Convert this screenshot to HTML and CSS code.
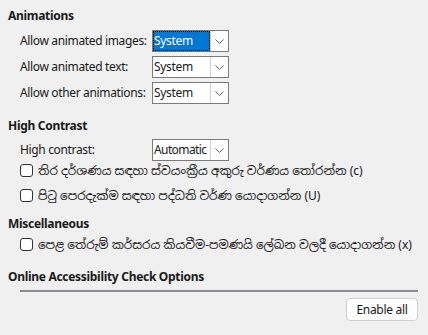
FILE: index.html
```html
<!DOCTYPE html>
<html>
<head>
<meta charset="utf-8">
<link rel="stylesheet" href="styles.css">
</head>
<body>
<div class="page">
  <section class="group g-anim">
    <h2 class="title">Animations</h2>
    <div class="formgrid">
      <label class="lbl">Allow animated images:</label>
      <div class="combo focused"><span class="val">System</span><span class="btn"><svg width="9" height="5" viewBox="0 0 9 5"><path d="M0.5 0.5 L4.5 4.5 L8.5 0.5" fill="none" stroke="#606060" stroke-width="1"/></svg></span></div>
      <label class="lbl">Allow animated text:</label>
      <div class="combo"><span class="val">System</span><span class="btn"><svg width="9" height="5" viewBox="0 0 9 5"><path d="M0.5 0.5 L4.5 4.5 L8.5 0.5" fill="none" stroke="#606060" stroke-width="1"/></svg></span></div>
      <label class="lbl">Allow other animations:</label>
      <div class="combo"><span class="val">System</span><span class="btn"><svg width="9" height="5" viewBox="0 0 9 5"><path d="M0.5 0.5 L4.5 4.5 L8.5 0.5" fill="none" stroke="#606060" stroke-width="1"/></svg></span></div>
    </div>
  </section>
  <section class="group g-hc">
    <h2 class="title">High Contrast</h2>
    <div class="formgrid">
      <label class="lbl">High contrast:</label>
      <div class="combo"><span class="val tight">Automatic</span><span class="btn"><svg width="9" height="5" viewBox="0 0 9 5"><path d="M0.5 0.5 L4.5 4.5 L8.5 0.5" fill="none" stroke="#606060" stroke-width="1"/></svg></span></div>
    </div>
    <div class="checks">
      <div class="check"><span class="box"></span><span class="si">තිර දර්ශණය සඳහා ස්වයංක්‍රීය අකුරු වර්ණය තෝරන්න (c)</span></div>
      <div class="check"><span class="box"></span><span class="si">පිටු පෙරදැක්ම සඳහා පද්ධති වර්ණ යොදාගන්න (U)</span></div>
    </div>
  </section>
  <section class="group g-misc">
    <h2 class="title">Miscellaneous</h2>
    <div class="check"><span class="box"></span><span class="si">පෙළ තේරුම් කර්සරය කියවීම-පමණයි ලේඛන වලදී යොදාගන්න (x)</span></div>
  </section>
  <section class="group">
    <h2 class="title">Online Accessibility Check Options</h2>
    <div class="sep"></div>
    <div class="actions"><button class="button">Enable all</button></div>
  </section>
</div>
</body>
</html>
```
FILE: styles.css
```css
html, body { margin: 0; padding: 0; }
body {
  background: #f0f0f0;
  font-family: "Noto Sans", "Noto Sans Sinhala", sans-serif;
  font-size: 12px;
  color: #1a1a1a;
  width: 428px;
  height: 335px;
  overflow: hidden;
}
.page { padding: 8px 10px 0 8px; }
.title {
  font-size: 12px; font-weight: bold; margin: 0; line-height: 16px;
  letter-spacing: -0.3px; white-space: nowrap;
}
.g-anim { margin-bottom: 14px; }
.g-hc { margin-bottom: 8px; }
.g-misc { margin-bottom: 12px; }
.formgrid {
  display: grid;
  grid-template-columns: 132px 77px;
  grid-auto-rows: 22px;
  row-gap: 4px;
  padding-left: 12px;
  margin-top: 6px;
  align-items: center;
}
.g-hc .formgrid { margin-top: 5px; }
.lbl { line-height: 22px; white-space: nowrap; letter-spacing: -0.35px; }
.combo {
  display: flex;
  height: 22px;
  box-sizing: border-box;
  border: 1px solid #7a7a7a;
  background: #fff;
  letter-spacing: -0.3px;
}
.val { flex: 1; padding-left: 1px; line-height: 20px; white-space: nowrap; overflow: hidden; }
.val.tight { letter-spacing: -0.6px; padding-left: 1px; }
.focused .val { background: #0078d7; color: #fff; outline: 1px dotted #000; outline-offset: -1px; }
.btn {
  width: 17px; flex: none;
  border-left: 1px solid #cfcfcf;
  display: flex; align-items: center; justify-content: center;
}
.checks { margin-top: -3px; }
.check { display: flex; align-items: center; padding-left: 12px; height: 25px; }
.box {
  width: 13px; height: 13px; box-sizing: border-box;
  border: 1px solid #333; border-radius: 3px; background: #fff;
  margin-right: 5px; flex: none;
}
.si { white-space: nowrap; }
.sep { height: 2px; background: #8a8d94; margin: 5px 0 0 12px; }
.actions { display: flex; justify-content: flex-end; margin-top: 6px; }
.button {
  font: inherit; color: #1a1a1a; letter-spacing: -0.3px;
  height: 23px; width: 72px; padding: 0;
  border: 1px solid #d0d0d0; border-radius: 4px; background: #fdfdfd;
}
```
